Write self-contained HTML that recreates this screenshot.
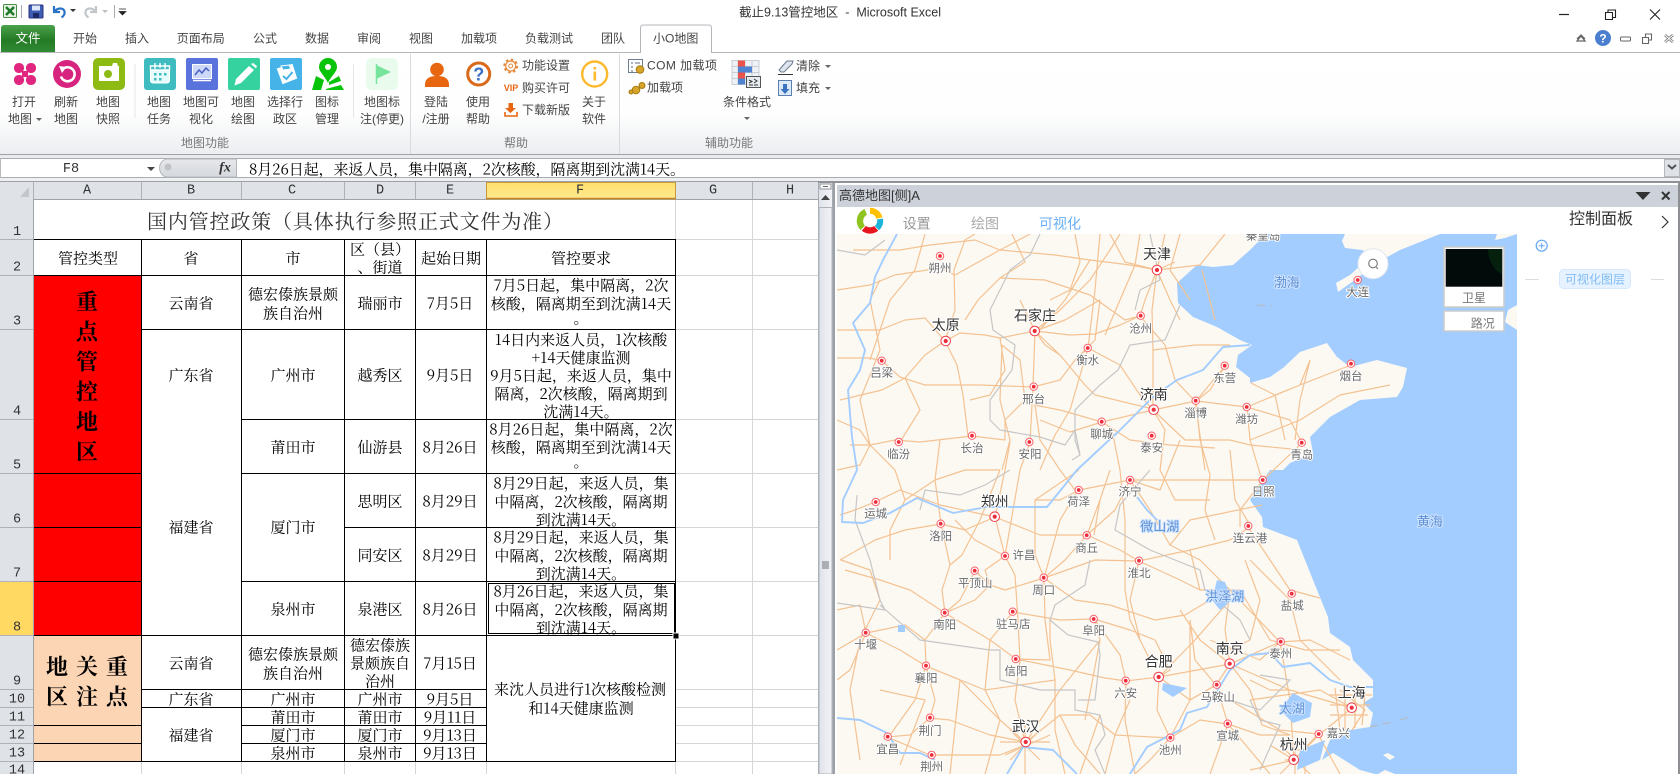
<!DOCTYPE html>
<html lang="zh"><head><meta charset="utf-8"><title>截止9.13管控地区 - Microsoft Excel</title>
<style>
html,body{margin:0;padding:0;background:#fff;width:1680px;height:774px;overflow:hidden}
svg{display:block;position:absolute;left:0;top:0}
text{dominant-baseline:central}
.m{text-anchor:middle}
.ui{font-family:"Liberation Sans","Noto Sans CJK SC",sans-serif;font-size:12px;fill:#444}
.cell{font-family:"Noto Serif CJK SC","Liberation Serif",serif;font-size:15px;fill:#000;text-anchor:middle}
.mono{font-family:"Liberation Mono","Noto Sans CJK SC",monospace;font-size:13.5px;fill:#333;text-anchor:middle}
.big{font-family:"Noto Serif CJK SC",serif;font-size:22px;font-weight:700;fill:#000;text-anchor:middle}
.ml text{font-family:"Liberation Sans","Noto Sans CJK SC",sans-serif;text-anchor:middle;paint-order:stroke;stroke:#fff;stroke-width:2px;stroke-linejoin:round}
.s{font-size:11.5px;fill:#6a6a6a}
.l{font-size:14px;fill:#333}
.b{font-size:13px;fill:#5f92d6;stroke:#cfe3ff!important}
</style></head><body>
<svg width="1680" height="774" viewBox="0 0 1680 774" xmlns="http://www.w3.org/2000/svg">
<defs>
<linearGradient id="rb" x1="0" y1="0" x2="0" y2="1"><stop offset="0" stop-color="#fff"/><stop offset=".6" stop-color="#fefefe"/><stop offset="1" stop-color="#eceef1"/></linearGradient>
<linearGradient id="gf" x1="0" y1="0" x2="0" y2="1"><stop offset="0" stop-color="#4aa24a"/><stop offset=".55" stop-color="#257a25"/><stop offset="1" stop-color="#2f8a33"/></linearGradient>
<linearGradient id="yl" x1="0" y1="0" x2="0" y2="1"><stop offset="0" stop-color="#ffdf6e"/><stop offset="1" stop-color="#ffe98f"/></linearGradient>
<linearGradient id="sb" x1="0" y1="0" x2="1" y2="0"><stop offset="0" stop-color="#dfe3ea"/><stop offset="1" stop-color="#f2f3f6"/></linearGradient>
<linearGradient id="pill" x1="0" y1="0" x2="0" y2="1"><stop offset="0" stop-color="#e6e8eb"/><stop offset="1" stop-color="#d5d8dc"/></linearGradient>
<clipPath id="mc"><rect x="837" y="234" width="680" height="540"/></clipPath>
<g id="d1"><circle r="3.7" fill="#fff" stroke="#f8636c" stroke-width="1"/><circle r="1.9" fill="#ee2d3a"/></g>
<g id="d2"><circle r="4.8" fill="#fff" stroke="#f0404c" stroke-width="1"/><circle r="2.1" fill="#ee2d3a"/></g>
</defs>

<!-- title bar and tabs -->
<rect width="1680" height="52" fill="#fff"/>
<rect x="3.5" y="4.5" width="13" height="13" rx="1" fill="#e8f3e6" stroke="#4b8f4b"/>
<path d="M6 7l8 8M14 7l-8 8" stroke="#1f7a2a" stroke-width="2.6"/>
<path d="M21.5 5v13M114.500 5v13" stroke="#a8acb0"/>
<rect x="29" y="5" width="14" height="13" rx="1" fill="#3f5db4" stroke="#23347c"/>
<rect x="32" y="5.500" width="8" height="5" fill="#dfe8f8"/><rect x="33" y="13" width="6" height="5" fill="#1d2c66"/>
<path d="M54 6v6h6M54.500 11.500c3-4 9-4 10 0 .6 3-1.500 5-3 6" fill="none" stroke="#2a74c8" stroke-width="2.200"/>
<path d="M70 9h6l-3 3z" fill="#333"/>
<path d="M96 6v6h-6M95.500 11.500c-3-4-9-4-10 0-.6 3 1.500 5 3 6" fill="none" stroke="#c2c6ca" stroke-width="2.200"/>
<path d="M102 10h6l-3 3z" fill="#b9bcc0"/>
<path d="M119 9h7M119 11.500h7l-3.500 3.500z" fill="#222" stroke="#222" stroke-width=".7"/>
<text class="ui" x="739" y="12.500" textLength="202" style="fill:#333;font-size:12.500px">截止9.13管控地区&#160;&#160;-&#160;&#160;Microsoft Excel</text>
<path d="M1559 14.500h10" stroke="#222" stroke-width="1.200"/>
<path d="M1605.500 12.500h7v7h-7zM1608 12.500v-2.500h7.500v7.500h-2.500" fill="none" stroke="#222" stroke-width="1.100"/>
<path d="M1650 9.500l10 10M1660 9.500l-10 10" stroke="#222" stroke-width="1.100"/>
<path d="M1577 41h8l-4-5z" fill="none" stroke="#666" stroke-width="1.300"/><path d="M1577 39l4-4 4 4" fill="none" stroke="#666" stroke-width="1.300"/>
<circle cx="1603" cy="38" r="8" fill="#4a7fd0"/><text x="1603" y="38.500" text-anchor="middle" style="font:bold 12px 'Liberation Sans',sans-serif;fill:#fff">?</text>
<rect x="1620.500" y="37" width="10" height="4" rx="1" fill="#fff" stroke="#666"/>
<path d="M1642.500 37.500h6v6h-6zM1645.500 37v-3h6v6h-2.500" fill="#fff" stroke="#666" stroke-width="1.100"/>
<path d="M1665 35l8 7M1673 35l-8 7" stroke="#777" stroke-width="2.600"/><path d="M1665 35l8 7M1673 35l-8 7" stroke="#fff" stroke-width="1"/>

<path d="M1 52V28q0-3 3-3h48q3 0 3 3v24z" fill="url(#gf)"/>
<text class="ui m" x="28" y="38.500" style="fill:#fff;font-size:12.500px">文件</text>
<g class="ui m">
<text x="85" y="38.500">开始</text><text x="137" y="38.500">插入</text><text x="200.700" y="38.500">页面布局</text><text x="265" y="38.500">公式</text><text x="317" y="38.500">数据</text><text x="369" y="38.500">审阅</text><text x="421" y="38.500">视图</text><text x="479" y="38.500">加载项</text><text x="549" y="38.500">负载测试</text><text x="613" y="38.500">团队</text>
</g>
<!-- ribbon -->
<rect x="0" y="52" width="1680" height="102" fill="url(#rb)"/>
<path d="M0 52.500h640M712 52.500h968" stroke="#b3b7bb"/>
<path d="M640.500 53V28q0-3 3-3h65q3 0 3 3v25" fill="#fff" stroke="#b3b7bb"/>
<text class="ui m" x="675.700" y="38.500">小O地图</text>
<path d="M0 154.500h1680" stroke="#9fa3a8"/>
<rect y="155" width="1680" height="3" fill="#e9ebee"/>
<path d="M135 64v54M353.500 64v54" stroke="#e3e5e8"/>
<path d="M410.500 54v100M619.500 54v100M1 0" stroke="#d8dade"/>

<g class="ui m">
<text x="24" y="102">打开</text><text x="20" y="119">地图</text><text x="66" y="102">刷新</text><text x="66" y="119">地图</text><text x="108" y="102">地图</text><text x="108" y="119">快照</text>
<text x="159" y="102">地图</text><text x="159" y="119">任务</text><text x="201" y="102">地图可</text><text x="201" y="119">视化</text><text x="243" y="102">地图</text><text x="243" y="119">绘图</text><text x="285" y="102">选择行</text><text x="285" y="119">政区</text><text x="327" y="102">图标</text><text x="327" y="119">管理</text>
<text x="382" y="102">地图标</text><text x="382" y="119">注(停更)</text>
<text x="436" y="102">登陆</text><text x="436" y="119">/注册</text><text x="478" y="102">使用</text><text x="478" y="119">帮助</text><text x="594" y="102">关于</text><text x="594" y="119">软件</text>
<text x="747" y="102">条件格式</text>
<text x="205" y="143" style="fill:#777">地图功能</text><text x="516" y="143" style="fill:#777">帮助</text><text x="729" y="143" style="fill:#777">辅助功能</text>
</g>
<path d="M36 118h6l-3 3zM744 117h6l-3 3zM825 65h6l-3 3zM825 87h6l-3 3z" fill="#666"/>
<g class="ui">
<text x="522" y="65.500">功能设置</text><text x="522" y="88">购买许可</text><text x="522" y="110">下载新版</text>
<text x="647" y="65.500" textLength="70">COM 加载项</text><text x="647" y="87.500">加载项</text>
<text x="796" y="66">清除</text><text x="796" y="88">填充</text>
</g>

<!-- map function icons -->
<g fill="#e0267f"><rect x="14" y="63" width="10" height="10" rx="4.500"/><rect x="26" y="63" width="10" height="10" rx="4.500"/><rect x="14" y="75" width="10" height="10" rx="4.500"/><rect x="26" y="75" width="10" height="10" rx="4.500"/><rect x="22" y="71" width="6" height="6"/></g>
<circle cx="67" cy="74" r="14" fill="#d6247f"/>
<path d="M62.500 69.500a7 7 0 1 1-1.500 7" fill="none" stroke="#fff" stroke-width="2.600"/><path d="M59 66l7.500 1-4.500 6z" fill="#fff"/>
<rect x="93" y="58" width="32" height="32" rx="5" fill="#8dbb14"/>
<path d="M99 66h13l1-3h4l1 3h1v15h-20z" fill="#fff"/><circle cx="108" cy="74" r="4" fill="#8dbb14"/>
<rect x="144" y="58" width="32" height="32" rx="3" fill="#3fbcc0"/>
<rect x="150.500" y="66" width="19" height="17" rx="2.500" fill="#e6fbfb" stroke="#fff"/><path d="M150.500 66h19v4h-19zM155 63v6M165 63v6M160 63v5" stroke="#fff" stroke-width="1.400" fill="#3fbcc0"/>
<g fill="#3fbcc0"><rect x="154" y="73" width="2.500" height="2.500"/><rect x="159" y="73" width="2.500" height="2.500"/><rect x="164" y="73" width="2.500" height="2.500"/><rect x="154" y="78" width="2.500" height="2.500"/><rect x="159" y="78" width="2.500" height="2.500"/></g>
<rect x="186" y="58" width="32" height="32" rx="2" fill="#5a72db"/>
<rect x="192.500" y="64.500" width="19" height="14" fill="#cdd7f8" stroke="#fff"/><path d="M193 80.500h18" stroke="#fff" stroke-width="1.500"/><path d="M195 75l4-5 3 3 4-5 3 3" fill="none" stroke="#4a5fc6" stroke-width="1.500"/>
<rect x="228" y="58" width="32" height="32" rx="2" fill="#35d2a0"/>
<path d="M236 79l13-13 5 4-13 13-6.500 2.500zM251 64l2-1 4 3-1 2.500z" fill="#fff"/>
<rect x="270" y="58" width="32" height="32" rx="2" fill="#45b3e8"/>
<path d="M277 68l16-4 4 15-15 5z" fill="#fff" transform="rotate(-3 287 74)"/><path d="M281 66l8-1 2 4-8 1z" fill="#45b3e8" stroke="#fff"/><path d="M283 76l3.500 3 6-7" fill="none" stroke="#45b3e8" stroke-width="2"/>
<path d="M328 58a9 9 0 0 0-9 9c0 5 6 9 9 16 3-7 9-11 9-16a9 9 0 0 0-9-9z" fill="#08c408"/><circle cx="328" cy="67" r="3" fill="#fff"/>
<path d="M316 76l8 4-3 10h-9zM329 82l10-6 2 5-12 4zM326 89l15-4 3 5h-18z" fill="#08c408"/>
<rect x="366" y="58" width="32" height="32" rx="6" fill="#e8fbed"/>
<path d="M376 65l15 7-15 7z" fill="#78e39b"/><path d="M376.500 64v20" stroke="#78e39b" stroke-width="1.500"/>
<circle cx="437" cy="69.500" r="6.800" fill="#e8660f"/><path d="M425 87v-2c0-7 5-9 12-9s12 2 12 9v2z" fill="#e8660f"/>
<circle cx="478.700" cy="74" r="11" fill="#fff" stroke="#d96a1c" stroke-width="3"/><text x="478.700" y="74.500" text-anchor="middle" style="font:bold 18px 'Liberation Sans',sans-serif;fill:#3a6fc4">?</text>
<circle cx="510.700" cy="66" r="5" fill="#fff" stroke="#e58a3c" stroke-width="1.200"/><circle cx="510.700" cy="66" r="6.400" fill="none" stroke="#e58a3c" stroke-width="2" stroke-dasharray="2.500 2.500"/><circle cx="510.700" cy="66" r="2" fill="none" stroke="#e58a3c"/>
<text x="511" y="88" text-anchor="middle" style="font:bold 9px 'Liberation Sans',sans-serif;fill:#e8660f">VIP</text>
<path d="M508.500 103h4.500v5h3l-5.500 5-5.500-5h3.500z" fill="#e8660f"/><path d="M505 112v4h12v-4" fill="none" stroke="#e8660f" stroke-width="1.600"/>
<circle cx="594.700" cy="74" r="12.500" fill="#fff" stroke="#fdb92e" stroke-width="2.400"/><rect x="593.500" y="67" width="2.600" height="2.600" fill="#fdb92e"/><rect x="593.500" y="71.500" width="2.600" height="9" fill="#fdb92e"/>
<rect x="628.500" y="59.500" width="14" height="13" fill="#fff" stroke="#6f7f92"/><path d="M631 63h2M631 67h2M631 71h2M635 63h5" stroke="#5a6b80"/>
<circle cx="640" cy="69.500" r="3.800" fill="#d7a52a" stroke="#a67a10"/><circle cx="636" cy="90" r="3.800" fill="#d7a52a" stroke="#a67a10"/><circle cx="642" cy="85.500" r="3" fill="#d7a52a" stroke="#a67a10"/><circle cx="631" cy="92" r="2" fill="#d7a52a" stroke="#a67a10"/>
<g stroke="#c8ced6" stroke-width="1"><rect x="732" y="60.500" width="27" height="24" fill="#eef1f6"/><path d="M738 60.500v24M745 60.500v24M752 60.500v24M732 66.500h27M732 72.500h27M732 78.500h27"/></g>
<rect x="738" y="60.500" width="7" height="6" fill="#e9534a"/><rect x="738" y="66.500" width="14" height="6" fill="#4f82d0"/><rect x="738" y="72.500" width="7" height="6" fill="#e9534a"/><rect x="738" y="78.500" width="7" height="6" fill="#4f82d0"/>
<rect x="746.500" y="76.500" width="14" height="11" fill="#e8edf2" stroke="#555"/><path d="M749 80l3 1.500-3 1.500M749 85h4M754 79l3 2-3 2M754 85h4" stroke="#333" fill="none"/>
<path d="M779 70l8-9h6l-1 3-8 8h-3z" fill="#dfe5ee" stroke="#6c7a8c"/><path d="M778 74.500h15" stroke="#333"/>
<rect x="778.500" y="80.500" width="13" height="15" fill="#dce9f8" stroke="#5b7fae"/><path d="M783 84h4v5h2.500l-4.500 5-4.500-5h2.500z" fill="#3c72bf"/>

<!-- formula bar -->
<rect y="158" width="1680" height="20" fill="#fff"/>
<path d="M0 158.500h1680M0 177.500h1680" stroke="#a9adb2"/>
<path d="M.5 158v20" stroke="#bbb"/>
<text class="mono" x="71" y="169.500">F8</text>
<path d="M147 167h8l-4 4z" fill="#444"/>
<path d="M236.500 159h-69a7.500 8.500 0 0 0 0 18h69z" fill="url(#pill)" stroke="#b3b6ba"/><circle cx="168" cy="167" r="3.500" fill="#bfc2c6"/>
<text x="225" y="168" text-anchor="middle" style="font:italic bold 14px 'Liberation Serif',serif;fill:#333">fx</text>
<text class="cell" x="249" y="169" style="text-anchor:start" textLength="436">8月26日起，来返人员，集中隔离，2次核酸，隔离期到沈满14天。</text>
<rect x="1664.500" y="159.500" width="15" height="17" fill="#dfe2e6" stroke="#b5b8bc"/><path d="M1668 165l4 3.500 4-3.500" fill="none" stroke="#555" stroke-width="2"/>
<rect y="178" width="1680" height="3" fill="#eef0f2"/>
<path d="M0 181.500h818" stroke="#9da1a6"/><rect x="818" y="181" width="862" height="2" fill="#8f9398"/>

<!-- grid base -->
<rect x="0" y="182" width="818" height="592" fill="#fff"/>
<g stroke="#d6d6d6"><path d="M33 761.500V774M141.500 761V774M241.500 761V774M344.500 761V774M415.500 761V774M486.500 761V774M675.500 199V774M752.500 199V774M676 239.500h142M676 275.500h142M676 329.500h142M676 419.500h142M676 473.500h142M676 527.500h142M676 581.500h142M676 635.500h142M676 689.500h142M676 707.500h142M676 725.500h142M676 743.500h142M676 761.500h142"/></g>
<!-- column headers -->
<rect x="0" y="182" width="818" height="17" fill="#dfe3e8"/>
<path d="M0 199.500h818" stroke="#9ea3a8"/>
<path d="M33.500 182v592M141.500 182v17M241.500 182v17M344.500 182v17M415.500 182v17M752.500 182v17" stroke="#aeb2b7"/>
<path d="M29 187v10H20z" fill="#c3c7cc"/>
<rect x="486.500" y="182.500" width="189" height="16.500" fill="url(#yl)" stroke="#c99a3c"/>
<path d="M486 198.500h190" stroke="#c2872a" stroke-width="1.500"/>
<g class="mono"><text x="87" y="191">A</text><text x="191" y="191">B</text><text x="292" y="191">C</text><text x="380" y="191">D</text><text x="450" y="191">E</text><text x="580" y="191">F</text><text x="713" y="191">G</text><text x="790" y="191">H</text></g>
<!-- row headers -->
<rect x="0" y="199" width="33" height="575" fill="#dfe3e8"/>
<rect x="0" y="581" width="33" height="54" fill="#ffd962"/>
<path d="M0 239.500h33M0 275.500h33M0 329.500h33M0 419.500h33M0 473.500h33M0 527.500h33M0 581.500h33M0 635.500h33M0 689.500h33M0 707.500h33M0 725.500h33M0 743.500h33M0 761.500h33" stroke="#aeb2b7"/>
<path d="M33.500 199v575" stroke="#9ea3a8"/>
<g class="mono"><text x="17" y="232.500">1</text><text x="17" y="268">2</text><text x="17" y="322">3</text><text x="17" y="412">4</text><text x="17" y="466">5</text><text x="17" y="520">6</text><text x="17" y="574">7</text><text x="17" y="628">8</text><text x="17" y="682">9</text><text x="17" y="700">10</text><text x="17" y="718">11</text><text x="17" y="736">12</text><text x="17" y="754">13</text><text x="17" y="771">14</text></g>

<!-- fills -->
<rect x="34" y="275" width="108" height="360" fill="#ff0000"/>
<rect x="34" y="635" width="108" height="126" fill="#fcd5b4"/>
<rect x="34" y="240" width="641" height="35" fill="#fff"/>
<!-- black borders -->
<g stroke="#000" fill="none" shape-rendering="crispEdges">
<path d="M34 239.500h642M34 275.500h642M34 761.500h642M141.500 239v523M241.500 239v523M344.500 239v523M415.500 239v523M486.500 239v523M675.500 239v523"/>
<path d="M142 329.500h534M242 419.500h434M34 473.500h108M242 473.500h434M34 527.500h108M345 527.500h331M34 581.500h108M242 581.500h434M34 635.500h642M142 689.500h345M142 707.500h345M242 725.500h245M34 725.500h108M242 743.500h245M34 743.500h108"/>
</g>

<!-- sheet text -->
<text x="147" y="220" textLength="416" style="font-family:'Noto Serif CJK SC',serif;font-size:20px;fill:#333">国内管控政策（具体执行参照正式文件为准）</text>
<g class="cell">
<text x="88" y="258">管控类型</text><text x="191" y="258">省</text><text x="293" y="258">市</text><text x="380" y="249">区（县）</text><text x="380" y="267">、街道</text><text x="451" y="258">起始日期</text><text x="581" y="258">管控要求</text>
<text x="191" y="303">云南省</text><text x="293" y="294">德宏傣族景颇</text><text x="293" y="313">族自治州</text><text x="380" y="303">瑞丽市</text><text x="450" y="303">7月5日</text>
<text x="581" y="285">7月5日起，集中隔离，2次</text><text x="581" y="303.500">核酸，隔离期至到沈满14天</text><text x="581" y="318">。</text>
<text x="191" y="375">广东省</text><text x="293" y="375">广州市</text><text x="380" y="375">越秀区</text><text x="450" y="375">9月5日</text>
<text x="581" y="339.500">14日内来返人员，1次核酸</text><text x="581" y="357.500">+14天健康监测</text><text x="581" y="375.500">9月5日起，来返人员，集中</text><text x="581" y="393.500">隔离，2次核酸，隔离期到</text><text x="581" y="411.500">沈满14天。</text>
<text x="293" y="447">莆田市</text><text x="380" y="447">仙游县</text><text x="450" y="447">8月26日</text>
<text x="581" y="429">8月26日起，集中隔离，2次</text><text x="581" y="447">核酸，隔离期至到沈满14天</text><text x="581" y="461.500">。</text>
<text x="191" y="527">福建省</text><text x="293" y="527">厦门市</text><text x="380" y="501">思明区</text><text x="450" y="501">8月29日</text>
<text x="581" y="483">8月29日起，来返人员，集</text><text x="581" y="501.500">中隔离，2次核酸，隔离期</text><text x="581" y="519.500">到沈满14天。</text>
<text x="380" y="555">同安区</text><text x="450" y="555">8月29日</text>
<text x="581" y="537">8月29日起，来返人员，集</text><text x="581" y="555.500">中隔离，2次核酸，隔离期</text><text x="581" y="573.500">到沈满14天。</text>
<text x="293" y="609">泉州市</text><text x="380" y="609">泉港区</text><text x="450" y="609">8月26日</text>
<text x="581" y="591">8月26日起，来返人员，集</text><text x="581" y="609.500">中隔离，2次核酸，隔离期</text><text x="581" y="627.500">到沈满14天。</text>
<text x="191" y="663">云南省</text><text x="293" y="654">德宏傣族景颇</text><text x="293" y="673">族自治州</text><text x="380" y="645">德宏傣族</text><text x="380" y="663">景颇族自</text><text x="380" y="681">治州</text><text x="450" y="663">7月15日</text>
<text x="191" y="699">广东省</text><text x="293" y="699">广州市</text><text x="380" y="699">广州市</text><text x="450" y="699">9月5日</text>
<text x="293" y="717">莆田市</text><text x="380" y="717">莆田市</text><text x="450" y="717">9月11日</text>
<text x="191" y="735">福建省</text><text x="293" y="735">厦门市</text><text x="380" y="735">厦门市</text><text x="450" y="735">9月13日</text>
<text x="293" y="753">泉州市</text><text x="380" y="753">泉州市</text><text x="450" y="753">9月13日</text>
<text x="580" y="689">来沈人员进行1次核酸检测</text><text x="581" y="708">和14天健康监测</text>
</g>
<g class="big"><text x="87" y="301">重</text><text x="87" y="331">点</text><text x="87" y="361">管</text><text x="87" y="391">控</text><text x="87" y="421">地</text><text x="87" y="451">区</text>
<text x="57" y="666">地</text><text x="87" y="666">关</text><text x="117" y="666">重</text><text x="57" y="696">区</text><text x="87" y="696">注</text><text x="117" y="696">点</text></g>
<!-- selection -->
<rect x="488.500" y="583.500" width="186" height="50" fill="none" stroke="#000"/>
<rect x="487" y="582" width="188" height="1" fill="#fff"/>
<rect x="673" y="633" width="6" height="6" fill="#000" stroke="#fff"/>

<!-- scrollbar -->
<rect x="818" y="183" width="15" height="591" fill="url(#sb)"/>
<path d="M818.500 183v591M832.500 183v591" stroke="#a7acb3"/>
<rect x="820" y="184" width="11" height="5" fill="#fff" stroke="#8e949b"/><path d="M823 186.500h5" stroke="#666"/>
<path d="M821 200l4.500-5 4.500 5z" fill="#444"/>
<rect x="819" y="207.500" width="13" height="566.500" rx="1" fill="url(#sb)" stroke="#aeb3ba"/>
<path d="M822 562h7M822 564h7M822 566h7M822 568h7" stroke="#6f747a"/>
<rect x="833" y="183" width="2" height="591" fill="#9aa0a6"/>
<rect x="835" y="183" width="845" height="591" fill="#fff"/>
<rect x="1678" y="183" width="2" height="591" fill="#8d8f93"/>

<!-- panel header -->
<rect x="837" y="185" width="841" height="22" fill="#cdd2da"/>
<text class="ui" x="839" y="195.500" style="font-size:13px;fill:#333">高德地图[侧]A</text>
<path d="M1635.500 192h15l-7.500 8z" fill="#333"/>
<path d="M1662 192l7.500 7.500M1669.500 192l-7.500 7.500" stroke="#333" stroke-width="2"/>
<path d="M870 207.700a13 13 0 0 1 12.500 9.500l-6 1.500a7 7 0 0 0-6.500-5z" fill="#ffc000"/>
<path d="M883 218.500a13 13 0 0 1-4 11.800l-4.200-4.300a7 7 0 0 0 2.200-6.500z" fill="#1cb4d8"/>
<path d="M878.200 230.700a13 13 0 0 1-16.400 0l4-4.700a7 7 0 0 0 8.400 0z" fill="#e8141e"/>
<path d="M860.500 230a13 13 0 0 1 4-21l2.500 5.800a7 7 0 0 0-2 11z" fill="#8fc31f"/>
<g class="ui m" style="font-size:14px"><text x="916.700" y="223.300" style="fill:#999;font-size:14px">设置</text><text x="985" y="223.300" style="fill:#aaa;font-size:14px">绘图</text><text x="1060" y="223.300" style="fill:#68aef5;font-size:14px">可视化</text></g>
<text class="ui m" x="1601" y="219.700" style="font-size:16px;fill:#333">控制面板</text>
<path d="M1662 216l6 6-6 6" fill="none" stroke="#333" stroke-width="1.200"/>
<circle cx="1541.700" cy="245.700" r="5.500" fill="#fff" stroke="#62aaf2" stroke-width="1.200"/><path d="M1538.700 245.700h6M1541.700 242.700v6" stroke="#62aaf2"/>
<path d="M1525 279.500h14M1651 279.500h13" stroke="#dcdcdc"/>
<rect x="1559.500" y="269.500" width="71" height="19" rx="4" fill="#e6f2ff" stroke="#d6e8fc"/>
<text class="ui m" x="1595" y="279.500" style="fill:#80bdf5">可视化图层</text>

<!-- MAP -->
<g clip-path="url(#mc)">
<rect x="837" y="234" width="680" height="540" fill="#a3cdff"/>
<path fill="#fcf9f3" d="M837 234H1268L1262 238 1250 250 1233 265 1213 267 1197 265 1177 283 1178 303 1193 317 1217 327 1240 340 1252 345 1238 355 1236 367 1250 378 1250 383 1270 377 1283 368 1300 352 1327 343 1337 357 1350 367 1377 360 1407 368 1403 387 1397 397 1360 400 1330 417 1317 430 1310 437 1313 453 1290 463 1283 470 1270 470 1250 500 1262 517 1263 527 1297 540 1313 580 1328 617 1330 633 1350 647 1353 660 1373 680 1373 697 1363 703 1373 713 1370 727 1350 730 1330 740 1322 760 1333 753 1360 770 1375 774H837Z"/>
<path fill="#fcf9f3" d="M1345 234L1342 241 1345 248 1362 250 1372 255 1350 275 1336 283 1338 292 1352 282 1378 262 1400 250 1425 240 1440 234ZM1497 234L1495 240 1505 238 1517 234ZM1508 310L1505 322 1517 330V305ZM1385 770L1378 774H1395ZM1383 755L1390 760 1395 757 1388 753Z"/>
<!-- roads -->
<g fill="none" stroke="#f4c292" stroke-width="1.200" stroke-linejoin="round">
<path d="M945 341L960 333 985 335 1000 338 1035 331M945 341L955 310 954 270 965 240 975 234M945 341L925 355 905 378 882 390 840 400M945 341L957 365 963 395 968 436M837 358L870 358 882 361 900 377 925 385 980 385 1034 387M1035 331L1033 387 1030 442 1020 470 1005 556M1035 331L1060 310 1090 280 1110 250 1120 234M1035 331L1060 355 1085 385 1095 395 1153 409M1157 270L1145 300 1140 316 1125 320 1090 295 1045 280 1000 278M1157 270L1152 310 1153 350 1153 410M1035 331L1070 335 1095 334 1120 325 1140 316M1088 348L1120 365 1140 395 1153 410M1033 387L1060 380 1075 360 1088 348M1153 410L1102 422 1060 410 1034 405"/>
<path d="M853 250L900 250 930 245 975 240 1000 250 1055 255 1090 260 1130 265 1157 270M837 290L870 285 895 275 940 268 955 275 1000 250 1030 234M837 330L880 330 905 320 925 318 945 341M1002 345L1020 360 1025 400 1005 420 1005 440 972 436 920 442 895 440 870 445 850 445M1100 234L1095 290 1088 348 1070 410 1055 435 1040 470M1180 234L1170 270 1190 300M1157 270L1200 265 1225 234M1140 316L1165 345 1175 380 1195 401 1205 470M1225 366L1210 390 1196 401M1090 260L1065 300 1040 330"/>
<path d="M995 517L1005 470 1010 442M995 517L1005 556 1015 575 1018 620 1020 660 1015 700 1025 742M995 517L965 530 941 524 905 530 875 540 840 560M995 517L1040 535 1087 535 1120 550 1139 561 1190 550 1230 540 1250 527M1087 535L1065 560 1044 578 1005 590 990 585 975 571M1044 578L1075 600 1110 605 1155 620 1185 615 1210 600M945 613L975 600 990 585 985 570 1005 556M945 613L942 590 950 565 941 524M945 613L910 590 880 580 845 570M1013 612L1060 620 1094 619 1130 630 1155 640 1170 670 1159 677M945 613L925 640 926 666 935 700 930 718 910 735 887 737M837 650L866 633 900 650 926 666 960 680 1000 720 1025 742M1016 659L1070 670 1105 678 1126 681 1159 677 1230 664M1159 677L1157 710 1170 738 1150 760 1135 774M1026 742L1060 715 1090 715 1115 735 1170 738M1026 742L990 735 950 720 930 718M887 737L930 755 1000 755 1025 745M1079 490L1130 480 1190 480 1262 480M1079 470L1035 500 1035 555 1044 578M1130 480L1150 510 1170 545 1200 560 1230 590 1280 642M1120 470L1125 520 1125 590 1130 620 1150 660M1050 620L1050 640 1055 680 1055 730 1065 774"/>
<path d="M1153 410L1196 401 1247 407 1290 420 1302 443M1196 401L1225 366M1247 407L1300 385 1351 365M1250 440L1300 420 1340 395 1390 385M1302 443L1263 480 1240 510 1240 527M1153 410L1185 440 1230 440 1250 445 1302 450M1251 383L1275 395 1300 385 1310 360M1275 395L1285 440M1310 360L1300 400 1295 440M1230 450L1235 500 1250 525"/>
<path d="M1248 527L1290 590 1320 598M1240 590L1270 640 1305 650 1340 650M1250 560L1290 600 1300 640 1340 680M1230 664L1280 642 1310 640 1350 660M1230 664L1290 690 1352 708 1320 734 1294 760M1230 700L1280 730 1318 734 1294 760 1250 770M1280 642L1290 700 1294 760M1250 700L1320 690 1352 708M1340 690L1365 710 1352 730M1318 734L1340 774M1228 724L1260 735 1290 735M1228 724L1210 774M1216 685L1228 724 1270 774M1230 664L1216 685 1190 700 1170 738"/>
<path d="M875 502L900 490 940 505 995 517M875 502L855 510 840 515M841 560L870 570 880 600 860 640 850 690 860 760M1000 470L980 520 962 555 950 565M1005 556L975 540 955 520M1044 578L1060 520 1078 490M1094 619L1100 640 1085 720M1139 561L1130 600 1140 640M1094 535L1100 500 1110 470M880 690L925 700 900 765M960 680L950 774M1000 720L985 774M1100 715L1080 774M1190 620L1190 700M1130 700L1115 735 1105 774M1100 640L1060 690 1026 742M1159 677L1195 640 1230 600M1180 610L1200 640 1230 664"/>
<path d="M870 445L860 400 880 350 870 300 880 280M905 378L920 410 900 442M1002 345L1000 400 1010 440 1002 470M1075 360L1095 340 1100 300M1202 270L1215 320M1112 430L1120 470M1180 440L1160 490 1130 480"/>
<!-- additional network -->
<path d="M1110 234L1125 262 1157 270 1175 262M1140 234L1135 265 1120 300 1105 335M1165 234L1157 270 1170 300 1180 320M1075 234L1080 262 1070 290 1050 300M1012 234L1025 262 1000 278 978 300 965 320M925 234L915 270 890 300 880 330 870 360M1020 300L1035 331 1065 320 1100 300M1000 338L1005 370 990 395 970 400M1060 355L1045 345 1035 331M1040 420L1070 432 1102 422 1130 440 1170 445 1215 448M1035 405L1040 440 1060 470 1075 490M1153 410L1165 430 1160 470 1175 500 1210 500M1196 401L1200 440 1210 475 1205 510 1215 540M1247 407L1250 440 1262 480M1153 350L1195 345 1230 345"/>
<path d="M837 470L860 465 870 445 895 470 905 500 890 530 890 560M837 420L860 430 870 445M905 500L935 480 965 470 1000 470M940 440L935 480 941 524M1035 500L1060 500 1079 490M1087 535L1100 500M1130 480L1115 510 1087 535M1170 545L1190 520 1262 505M1190 550L1200 590 1230 590M1139 561L1180 580 1200 590 1240 590M1044 578L1045 620 1050 660 1016 659M975 571L960 600 945 613M1013 612L990 640 985 690 1000 720M945 613L990 640 1016 659M1094 619L1120 655 1126 681M1044 578L1095 560 1139 561M837 610L860 605 866 633 850 670 837 680M866 633L905 625 925 640M926 666L915 700 890 735M926 666L985 690 1055 680"/>
<path d="M1000 742H1050M1010 730L1040 760M1040 730L1010 760M1025 720V774M1005 755L1050 735M1060 715L1075 745 1100 774M1126 681L1125 720 1135 774M1159 677L1190 700 1216 685M1170 738L1200 720 1228 724M1216 685L1195 660 1190 620M1230 664L1225 630 1230 590M1230 650L1250 640 1260 600 1245 560M1230 664L1250 690 1262 725M1210 640L1260 660 1280 642M1262 725L1290 735M1250 680L1270 690 1290 690"/>
<path d="M1330 695H1372M1330 705H1370M1330 715H1368M1335 688L1340 730M1345 688V730M1355 690V728M1365 695L1362 725M1290 750H1320M1285 760H1315M1295 742V774M1305 742V774M1280 745L1310 774M1270 745L1294 760 1280 774"/>
</g>
<!-- province borders -->
<g fill="none" stroke="#c6c6c6" stroke-width="1.200">
<path d="M1040 234L1030 255 1010 270 1000 290 990 310 993 330 1015 345 1012 370 990 400 990 420 1000 430 1040 437 1065 445 1075 430 1080 455 1072 460"/>
<path d="M857 495L855 520 870 560 880 600 885 610 837 603M880 605L920 640 990 650 1000 650 1000 680 1040 690 1075 690 1075 700 1075 710 1100 715 1105 735 1095 750 1105 774"/>
<path d="M1150 470L1120 505 1115 530 1150 550 1175 560 1200 570 1205 590 1240 620 1250 640"/>
<path d="M1090 560L1085 585 1055 605 1050 620 1068 635 1098 642 1100 655 1095 700 1078 700"/>
<path d="M1150 234L1160 280 1140 290 1135 310M1180 305L1165 340 1130 345 1118 370 1100 385 1075 410 1075 440 1080 455M837 250L865 255 885 240M1010 470L985 485 960 495 925 490 920 510M1260 675L1290 680 1260 710 1230 700M1250 700L1260 720 1280 725 1260 770"/>
</g>
<!-- water -->
<g fill="none" stroke="#a3cdff" stroke-width="1.900" stroke-linejoin="round">
<path d="M897 234L883 260 875 277 870 303 853 323 865 350 860 370 848 390 852 437 857 470 843 500 842 522 863 523 890 513 917 498 953 513 987 507 1047 507 1077 470 1107 442 1117 433 1137 413 1153 397 1177 380 1203 370 1223 347 1250 345"/>
<path d="M837 718L860 720 887 733 900 753 920 753 935 760M1007 774L1023 747 1053 750 1077 774M1130 774L1147 747 1180 730 1187 713 1207 707 1230 670 1250 655 1270 653 1283 667 1310 663 1330 680 1350 687 1373 687"/>
<path d="M1137 497L1147 510 1157 520"/>
</g>
<g fill="#a3cdff"><path d="M1280 710L1293 693 1312 703 1310 717 1293 723ZM1163 683L1187 688 1173 697 1162 690ZM1217 580L1225 582 1232 600 1220 610 1212 600ZM1300 750L1325 740 1320 760 1297 770ZM898 625L905 625 905 632 898 632Z"/></g>
<path d="M1257 305L1272 306M1400 720L1412 716M1370 727L1392 722" stroke="#b8b8b8" stroke-dasharray="8 5" fill="none"/>

<!-- minor markers -->
<use href="#d1" x="940" y="256"/><use href="#d1" x="1140.700" y="315.700"/><use href="#d1" x="1087.700" y="348"/><use href="#d1" x="881.700" y="360.700"/><use href="#d1" x="1224.700" y="365.700"/><use href="#d1" x="1195.700" y="400.700"/><use href="#d1" x="1246.700" y="407"/><use href="#d1" x="1033.700" y="386.700"/><use href="#d1" x="1101.700" y="421.700"/><use href="#d1" x="1151.700" y="435.700"/><use href="#d1" x="972" y="435.700"/><use href="#d1" x="1029.300" y="442"/><use href="#d1" x="898.700" y="442"/><use href="#d1" x="1357.700" y="280"/><use href="#d1" x="1351" y="363.700"/><use href="#d1" x="1301.700" y="442.700"/><use href="#d1" x="875.700" y="502"/><use href="#d1" x="1078.700" y="490"/><use href="#d1" x="1130" y="480"/><use href="#d1" x="940.700" y="523.700"/><use href="#d1" x="1086.700" y="535.300"/><use href="#d1" x="1248.300" y="526"/><use href="#d1" x="1005" y="556"/><use href="#d1" x="1139" y="560.700"/><use href="#d1" x="974.700" y="570.700"/><use href="#d1" x="1043.700" y="577.700"/><use href="#d1" x="944.700" y="612.700"/><use href="#d1" x="1012.700" y="611.700"/><use href="#d1" x="1093.700" y="619"/><use href="#d1" x="865.700" y="632.700"/><use href="#d1" x="1015.700" y="659"/><use href="#d1" x="926" y="665.700"/><use href="#d1" x="1125.700" y="680.700"/><use href="#d1" x="1216.700" y="684.700"/><use href="#d1" x="930" y="717.700"/><use href="#d1" x="1227.700" y="723.700"/><use href="#d1" x="887.700" y="736.700"/><use href="#d1" x="1170.300" y="737.700"/><use href="#d1" x="931.700" y="755"/><use href="#d1" x="1262.700" y="480"/><use href="#d1" x="1291.700" y="593.700"/><use href="#d1" x="1280.700" y="641.700"/><use href="#d1" x="1318.700" y="734"/>
<use href="#d2" x="945.700" y="341"/><use href="#d2" x="1034.700" y="331"/><use href="#d2" x="1157" y="270"/><use href="#d2" x="1153.700" y="409.700"/><use href="#d2" x="994.700" y="516.700"/><use href="#d2" x="1229.700" y="663.700"/><use href="#d2" x="1158.700" y="677"/><use href="#d2" x="1025.700" y="742"/><use href="#d2" x="1351.700" y="707.700"/><use href="#d2" x="1293.700" y="759.700"/>
<g class="ml">
<text class="s" x="940" y="269">朔州</text><text class="s" x="1140.700" y="329.300">沧州</text><text class="s" x="1087.700" y="361">衡水</text><text class="s" x="881.700" y="373.700">吕梁</text><text class="s" x="1224.700" y="379">东营</text><text class="s" x="1195.700" y="414">淄博</text><text class="s" x="1246.700" y="420">潍坊</text><text class="s" x="1033.700" y="400">邢台</text><text class="s" x="1101.700" y="435">聊城</text><text class="s" x="1151.700" y="448.700">泰安</text><text class="s" x="972" y="449">长治</text><text class="s" x="1030" y="455">安阳</text><text class="s" x="898.700" y="455">临汾</text><text class="s" x="1357.700" y="293">大连</text><text class="s" x="1351" y="377">烟台</text><text class="s" x="1301.700" y="455.700">青岛</text><text class="s" x="1263" y="236.700">秦皇岛</text>
<text class="s" x="875.700" y="514.700">运城</text><text class="s" x="1078.700" y="502.700">荷泽</text><text class="s" x="1130" y="492.700">济宁</text><text class="s" x="940.700" y="537">洛阳</text><text class="s" x="1086.700" y="549">商丘</text><text class="s" x="1250" y="539">连云港</text><text class="s" x="1024" y="556">许昌</text><text class="s" x="1139" y="574">淮北</text><text class="s" x="975.300" y="584">平顶山</text><text class="s" x="1043.700" y="591">周口</text><text class="s" x="944.700" y="625.700">南阳</text><text class="s" x="1013.300" y="625">驻马店</text><text class="s" x="1093.700" y="631.700">阜阳</text><text class="s" x="865.700" y="645.700">十堰</text><text class="s" x="1016" y="672">信阳</text><text class="s" x="926" y="679">襄阳</text><text class="s" x="1125.700" y="694">六安</text><text class="s" x="1217.700" y="698">马鞍山</text><text class="s" x="930" y="731.300">荆门</text><text class="s" x="1227.700" y="736.700">宣城</text><text class="s" x="887.700" y="750">宜昌</text><text class="s" x="1170.300" y="751">池州</text><text class="s" x="931.700" y="767.700">荆州</text><text class="s" x="1263.300" y="492.700">日照</text><text class="s" x="1292.300" y="606.700">盐城</text><text class="s" x="1280.700" y="654.700">泰州</text><text class="s" x="1338.300" y="734">嘉兴</text>
<text class="l" x="945.700" y="325">太原</text><text class="l" x="1035" y="315.300">石家庄</text><text class="l" x="1157" y="254">天津</text><text class="l" x="1153.700" y="394.700">济南</text><text class="l" x="994.700" y="501.300">郑州</text><text class="l" x="1229.700" y="648.300">南京</text><text class="l" x="1158.700" y="661.300">合肥</text><text class="l" x="1025.700" y="726.300">武汉</text><text class="l" x="1351.700" y="692.300">上海</text><text class="l" x="1293.700" y="744.300">杭州</text>
<text class="b" x="1286.700" y="282.300">渤海</text><text class="b" x="1159.700" y="526.300">微山湖</text><text class="b" x="1224.700" y="596.700">洪泽湖</text><text class="b" x="1430" y="521.300">黄海</text><text class="b" x="1292" y="708.700">太湖</text>
</g>
<circle cx="1373" cy="263.700" r="15" fill="#fff" stroke="#dfe6ee"/><circle cx="1373" cy="263.500" r="4.300" fill="none" stroke="#777" stroke-width="1.100"/><path d="M1376 267l2 2" stroke="#777"/>
<rect x="1444" y="247" width="60" height="60" fill="#fff" stroke="#ccc" stroke-width="1.500"/>
<rect x="1445.700" y="249" width="56.600" height="37.700" fill="#020a0a"/>
<path d="M1488 249h14v25c-6-2-14-12-14-25z" fill="#06200e"/>
<text class="ui m" x="1474" y="298" style="fill:#777;font-size:12px">卫星</text>
<rect x="1444" y="311" width="60" height="20" fill="#fff" stroke="#ccc" stroke-width="1.500"/>
<text class="ui m" x="1482.700" y="323.700" style="fill:#777;font-size:12px">路况</text>
</g>
</svg>
</body></html>
